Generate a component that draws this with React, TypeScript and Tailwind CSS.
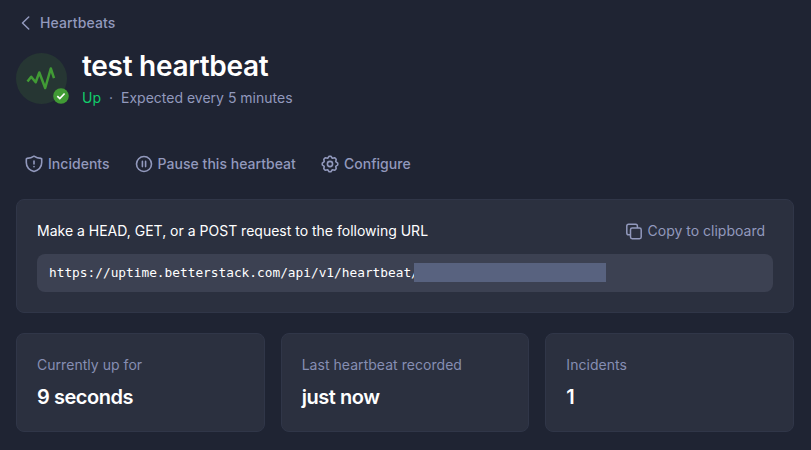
import type { ReactNode } from "react";

function ShieldIcon() {
  return (
    <svg width="18" height="18" viewBox="0 0 18 18" fill="none" stroke="currentColor" strokeWidth="1.6" strokeLinecap="round" strokeLinejoin="round">
      <path d="M9 1.2C7 2.6 4.7 3.3 2 3.4C1.5 3.4 1.3 3.7 1.3 4.2V7.5C1.3 11.8 4.2 15 9 16.5C13.8 15 16.7 11.8 16.7 7.5V4.2C16.7 3.7 16.5 3.4 16 3.4C13.3 3.3 11 2.6 9 1.2Z" />
      <path d="M9 6V9M9 11.6V11.7" />
    </svg>
  );
}

function PauseIcon() {
  return (
    <svg width="18" height="18" viewBox="0 0 18 18" fill="none" stroke="currentColor" strokeWidth="1.6" strokeLinecap="round">
      <circle cx="9" cy="9" r="7.5" />
      <path d="M7.4 6.4V11.6M10.6 6.4V11.6" />
    </svg>
  );
}

function GearIcon() {
  return (
    <svg width="18" height="18" viewBox="0 0 18 18" fill="none" stroke="currentColor" strokeWidth="1.6" strokeLinejoin="round">
      <path d="M8.1 1.3H9.9L11.3 3.2L13.8 2.8L15.2 4.2L14.8 6.7L16.7 8.1V9.9L14.8 11.3L15.2 13.8L13.8 15.2L11.3 14.8L9.9 16.7H8.1L6.7 14.8L4.2 15.2L2.8 13.8L3.2 11.3L1.3 9.9V8.1L3.2 6.7L2.8 4.2L4.2 2.8L6.7 3.2Z" />
      <circle cx="9" cy="9" r="2.6" />
    </svg>
  );
}

function CopyIcon() {
  return (
    <svg width="18" height="18" viewBox="0 0 18 18" fill="none" stroke="currentColor" strokeWidth="1.5" strokeLinejoin="round">
      <rect x="5.5" y="6" width="10.7" height="10.7" rx="1.7" />
      <path d="M5.5 12.7H3.6Q1.8 12.7 1.8 10.9V4.1Q1.8 2.3 3.6 2.3H10.7Q12.4 2.3 12.4 4.1V6" />
    </svg>
  );
}

function Action({ icon, label }: { icon: ReactNode; label: string }) {
  return (
    <button className="flex items-center gap-[5px]">
      {icon}
      <span>{label}</span>
    </button>
  );
}

function Stat({ label, value }: { label: string; value: string }) {
  return (
    <div className="h-[99px] rounded-lg border border-[#303648] bg-[#2b303f] px-5 pt-[21px]">
      <div className="text-[14px] leading-5 tracking-[0.04px] text-[#868eb3]">{label}</div>
      <div className="mt-2 text-[20px] leading-7 font-semibold tracking-[-0.45px] text-white">{value}</div>
    </div>
  );
}

export default function App() {
  return (
    <main className="h-[450px] w-[811px] overflow-hidden bg-[#1f2433] pr-[17px] pl-4 font-['Inter',sans-serif] text-[14px] leading-5 text-[#9299bd]">
      <nav className="flex items-center gap-[9px] pt-[13px] pl-[5px] font-medium tracking-[0.1px]">
        <svg width="10" height="14" viewBox="0 0 10 14" fill="none" stroke="currentColor" strokeWidth="1.5" strokeLinecap="round" strokeLinejoin="round">
          <path d="M7.7 1L1.5 7L7.7 13" />
        </svg>
        <span>Heartbeats</span>
      </nav>

      <header className="mt-[15px] flex h-[60px] gap-[15px]">
        <div className="relative mt-[5px] size-[51px] rounded-full bg-[#263633]">
          <svg width="51" height="51" viewBox="0 0 51 51" fill="none" stroke="#419b35" strokeWidth="2.5" strokeLinejoin="round">
            <path d="M11.5 28.5L15.2 23.8L19.7 29.3L23.3 19.5L29.2 35L34.8 15.5L38 25.2" />
          </svg>
          <svg className="absolute top-[35px] left-[37px]" width="16" height="16" viewBox="0 0 16 16" fill="none">
            <circle cx="8" cy="8" r="7.8" fill="#419b35" />
            <path d="M4.3 8.2L6.8 10.6L11.6 5.5" stroke="white" strokeWidth="1.7" />
          </svg>
        </div>
        <div>
          <h1 className="text-[28px] leading-9 font-semibold tracking-[-0.28px] text-white">test heartbeat</h1>
          <p className="mt-1">
            <span className="text-[#12ce6b]">Up</span>
            <span className="px-2">·</span>
            <span>Expected every 5 minutes</span>
          </p>
        </div>
      </header>

      <div className="mt-[46px] flex items-center gap-[25px] pl-[9px] font-medium tracking-[0.03px]">
        <Action icon={<ShieldIcon />} label="Incidents" />
        <Action icon={<PauseIcon />} label="Pause this heartbeat" />
        <Action icon={<GearIcon />} label="Configure" />
      </div>

      <section className="mt-[25px] h-[114px] rounded-lg border border-[#303648] bg-[#2b303f] px-5 pt-[21px]">
        <div className="flex items-center justify-between pr-2">
          <h2 className="text-white">Make a HEAD, GET, or a POST request to the following URL</h2>
          <Action icon={<CopyIcon />} label="Copy to clipboard" />
        </div>
        <div className="mt-[13px] flex h-[38px] items-center rounded-lg bg-[#3c4152] pl-3">
          <code className="w-[365px] font-['DejaVu_Sans_Mono',monospace] text-[12.8px] leading-5 whitespace-nowrap text-white">
            https://uptime.betterstack.com/api/v1/heartbeat/
          </code>
          <span className="relative mb-px h-[19px] w-48 bg-[#58627f]" />
        </div>
      </section>

      <section className="mt-5 grid grid-cols-3 gap-4">
        <Stat label="Currently up for" value="9 seconds" />
        <Stat label="Last heartbeat recorded" value="just now" />
        <Stat label="Incidents" value="1" />
      </section>
    </main>
  );
}
